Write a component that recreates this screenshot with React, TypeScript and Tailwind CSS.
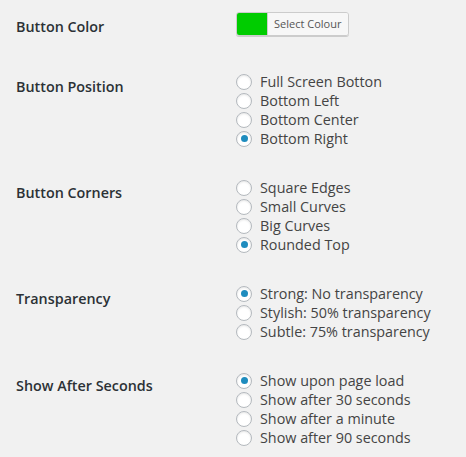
import React from "react";

type Group = { label: string; options: string[]; checked: number };

const groups: Group[] = [
  { label: "Button Position", options: ["Full Screen Botton", "Bottom Left", "Bottom Center", "Bottom Right"], checked: 3 },
  { label: "Button Corners", options: ["Square Edges", "Small Curves", "Big Curves", "Rounded Top"], checked: 3 },
  { label: "Transparency", options: ["Strong: No transparency", "Stylish: 50% transparency", "Subtle: 75% transparency"], checked: 0 },
  { label: "Show After Seconds", options: ["Show upon page load", "Show after 30 seconds", "Show after a minute", "Show after 90 seconds"], checked: 0 },
];

function Radio({ on }: { on: boolean }) {
  return (
    <span className="w-4 h-4 shrink-0 rounded-full border border-[#b4b9be] bg-white shadow-[inset_0_1px_2px_rgba(0,0,0,0.1)] flex items-center justify-center">
      {on && <span className="w-[7px] h-[7px] rounded-full bg-[#1e8cbe]" />}
    </span>
  );
}

export default function App() {
  return (
    <div className="w-[466px] h-[457px] bg-[#f1f1f1] overflow-hidden text-[14.35px] leading-[19px] font-['Open_Sans',sans-serif]">
      {/* colour row */}
      <div className="flex h-[57px]">
        <div className="w-[236px] pl-4 pt-[17px] font-semibold text-[#2c3136]">Button Color</div>
        <div className="pt-3">
          <div className="flex h-6 w-[113px] rounded-[3px] border border-[#ccc] shadow-[0_1px_0_#ccc] overflow-hidden">
            <span className="w-[30px] bg-[#00cc00]" />
            <span className="flex-1 bg-[#f7f7f7] border-l border-[#ccc] text-[11px] leading-[22px] text-[#555] pl-[6px]">
              Select Colour
            </span>
          </div>
        </div>
      </div>

      {groups.map((g) => (
        <div key={g.label} className="flex">
          <div className="w-[236px] pl-4 pt-5 pb-5 font-semibold text-[#2c3136]">{g.label}</div>
          <div className="py-[15px] flex flex-col">
            {g.options.map((o, i) => (
              <label key={o} className="flex items-center gap-2 text-[#444] h-[19px]">
                <Radio on={i === g.checked} />
                <span>{o}</span>
              </label>
            ))}
          </div>
        </div>
      ))}
    </div>
  );
}
